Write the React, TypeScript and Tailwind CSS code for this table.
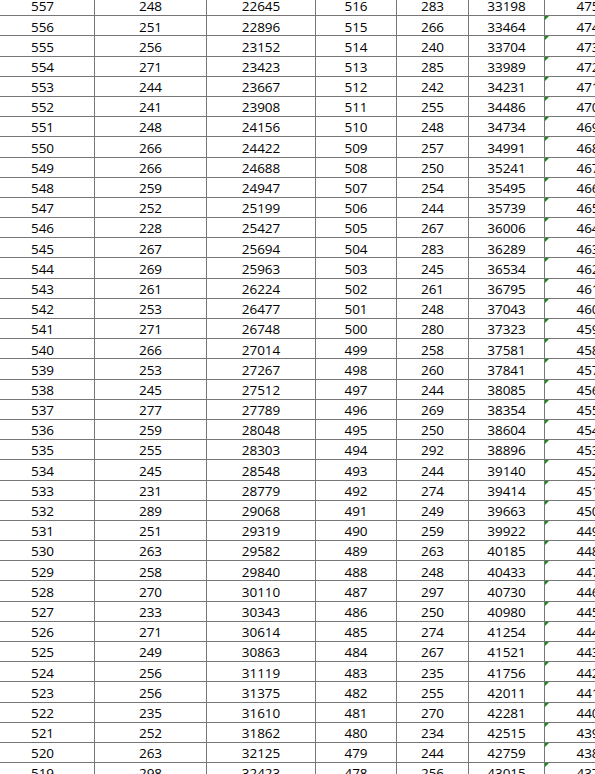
import React from "react";

const c2 = [248,251,256,271,244,241,248,266,266,259,252,228,267,269,261,253,271,266,253,245,277,259,255,245,231,289,251,263,258,270,233,271,249,256,256,235,252,263,298];
const c3 = [22645,22896,23152,23423,23667,23908,24156,24422,24688,24947,25199,25427,25694,25963,26224,26477,26748,27014,27267,27512,27789,28048,28303,28548,28779,29068,29319,29582,29840,30110,30343,30614,30863,31119,31375,31610,31862,32125,32423];
const c5 = [283,266,240,285,242,255,248,257,250,254,244,267,283,245,261,248,280,258,260,244,269,250,292,244,274,249,259,263,248,297,250,274,267,235,255,270,234,244,256];
const c6 = [33198,33464,33704,33989,34231,34486,34734,34991,35241,35495,35739,36006,36289,36534,36795,37043,37323,37581,37841,38085,38354,38604,38896,39140,39414,39663,39922,40185,40433,40730,40980,41254,41521,41756,42011,42281,42515,42759,43015];

const cell = "flex items-center justify-center pt-[3px] border-r border-[#777777] shrink-0";

export default function App() {
  return (
    <div className="w-[595px] h-[774px] overflow-hidden bg-white">
      <div
        className="-mt-[4px] -ml-[9px] flex flex-col text-[13.5px] leading-none text-black"
        style={{ fontFamily: '"Open Sans", "Liberation Sans", sans-serif' }}
      >
        {c2.map((_, i) => (
          <div key={i} className="flex h-[20.19px] shrink-0 border-b border-[#777777]">
            <div className={`${cell} w-[104px]`}>{557 - i}</div>
            <div className={`${cell} w-[112px]`}>{c2[i]}</div>
            <div className={`${cell} w-[109px]`}>{c3[i]}</div>
            <div className={`${cell} w-[81px]`}>{516 - i}</div>
            <div className={`${cell} w-[72px]`}>{c5[i]}</div>
            <div className={`${cell} w-[76px]`}>{c6[i]}</div>
            <div className="relative flex w-[86px] shrink-0 items-center justify-center pt-[3px]">
              <span className="absolute left-0 top-0 h-0 w-0 border-t-[4px] border-r-[4px] border-t-[#1a8a1a] border-r-transparent" />
              {475 - i}
            </div>
          </div>
        ))}
      </div>
    </div>
  );
}
